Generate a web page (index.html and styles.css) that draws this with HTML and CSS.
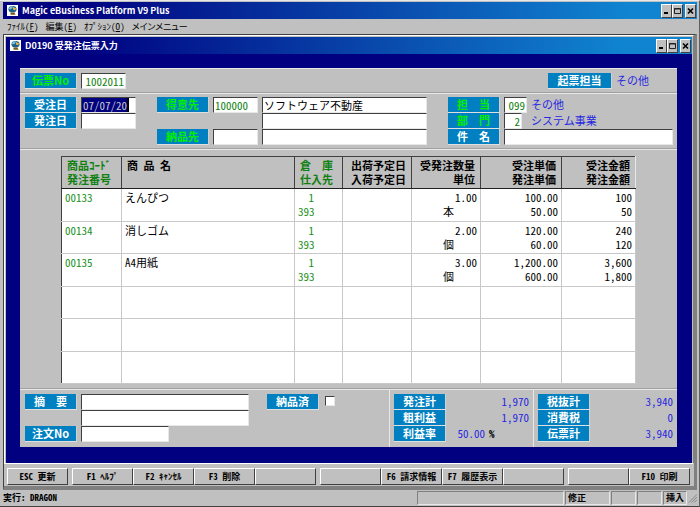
FILE: index.html
```html
<!DOCTYPE html>
<html lang="ja">
<head>
    <meta charset="UTF-8">
    <meta name="viewport" content="width=device-width, initial-scale=1.0">
    <title>Magic eBusiness Platform V9 Plus</title>
    <link rel="stylesheet" href="styles.css">
</head>
<body>
    <svg class="defs" width="0" height="0" aria-hidden="true">
        <symbol id="globe" viewBox="0 0 11 11">
            <rect width="11" height="11" fill="#fff"/>
            <ellipse cx="5.5" cy="4.2" rx="4" ry="3.200" fill="#1c5f8c"/>
            <path d="M1.800 3.600Q3 1 6 1.400L5 3.600L3 4.600Z" fill="#7cc4dd"/>
            <path d="M6 2L9.200 3.400L8 5.200L6 4.600Z" fill="#e9b64a"/>
            <path d="M3.500 7.500h4L8.500 9.800H3.500Z" fill="#7a5a1c"/>
        </symbol>
        <symbol id="min" viewBox="0 0 9 12"><path d="M2 8h4" stroke="#000" stroke-width="2"/></symbol>
        <symbol id="max" viewBox="0 0 9 12"><path d="M1.500 3.500h6v5h-6zM1 4h7" stroke="#222" fill="none"/></symbol>
        <symbol id="close" viewBox="0 0 9 12"><path d="M2 3.500l5 5M7 3.500l-5 5" stroke="#000" stroke-width="1.600"/></symbol>
    </svg>

    <header class="titlebar">
        <svg class="app-icon"><use href="#globe"/></svg>
        <h1>Magic eBusiness Platform V9 Plus</h1>
        <div class="controls">
            <button aria-label="最小化"><svg><use href="#min"/></svg></button>
            <button aria-label="最大化"><svg><use href="#max"/></svg></button>
            <button class="close" aria-label="閉じる"><svg><use href="#close"/></svg></button>
        </div>
    </header>

    <nav class="menu">
        <button>ﾌｧｲﾙ(<u>F</u>)</button>
        <button>編集(<u>E</u>)</button>
        <button>ｵﾌﾟｼｮﾝ(<u>O</u>)</button>
        <button class="wide">メインメニュー</button>
    </nav>

    <main class="workspace">
        <div class="window">
            <div class="titlebar">
                <svg class="app-icon"><use href="#globe"/></svg>
                <h2>D0190 受発注伝票入力</h2>
                <div class="controls">
                    <button aria-label="最小化"><svg><use href="#min"/></svg></button>
                    <button aria-label="最大化"><svg><use href="#max"/></svg></button>
                    <button class="close" aria-label="閉じる"><svg><use href="#close"/></svg></button>
                </div>
            </div>

            <form class="panel">
                <div class="section slip">
                    <div class="row">
                        <label class="tag key" for="slip_no">伝票No</label>
                        <input class="code right" type="text" id="slip_no" value="1002011">
                    </div>
                    <div class="row author">
                        <span class="tag long">起票担当</span>
                        <span class="info">その他</span>
                    </div>
                </div>

                <div class="section fields">
                    <div class="dates">
                        <div class="row">
                            <label class="tag" for="order_date">受注日</label>
                            <input class="date selected" type="text" id="order_date" value="07/07/20">
                        </div>
                        <div class="row">
                            <label class="tag" for="purchase_date">発注日</label>
                            <input class="date" type="text" id="purchase_date">
                        </div>
                    </div>
                    <div class="customer">
                        <div class="row">
                            <label class="tag key" for="customer">得意先</label>
                            <input class="code" type="text" id="customer" value="100000">
                            <input class="name" type="text" aria-label="得意先名" value="ソフトウェア不動産">
                        </div>
                        <div class="row">
                            <input class="name second" type="text" aria-label="得意先名2">
                        </div>
                        <div class="row">
                            <label class="tag key" for="delivery">納品先</label>
                            <input class="code" type="text" id="delivery">
                            <input class="name" type="text" aria-label="納品先名">
                        </div>
                    </div>
                    <div class="staff">
                        <div class="row">
                            <label class="tag key" for="staff">担　当</label>
                            <input class="staff-no right" type="text" id="staff" value="099">
                            <span class="info">その他</span>
                        </div>
                        <div class="row">
                            <label class="tag key" for="dept">部　門</label>
                            <input class="dept-no right" type="text" id="dept" value="2">
                            <span class="info">システム事業</span>
                        </div>
                        <div class="row">
                            <label class="tag" for="subject">件　名</label>
                            <input class="name" type="text" id="subject">
                        </div>
                    </div>
                </div>

                <div class="section lines">
                    <table>
                        <colgroup>
                            <col class="c-code"><col><col class="c-store"><col class="c-day"><col class="c-qty"><col class="c-price"><col class="c-sum">
                        </colgroup>
                        <thead>
                            <tr>
                                <th class="key">商品ｺｰﾄﾞ<br>発注番号</th>
                                <th>商 品 名</th>
                                <th class="key">倉　庫<br>仕入先</th>
                                <th class="num">出荷予定日<br>入荷予定日</th>
                                <th class="num">受発注数量<br>単位</th>
                                <th class="num">受注単価<br>発注単価</th>
                                <th class="num">受注金額<br>発注金額</th>
                            </tr>
                        </thead>
                        <tbody>
                            <tr>
                                <td class="code-cell">00133</td>
                                <td>えんぴつ</td>
                                <td class="store">1<br>393</td>
                                <td></td>
                                <td class="num">1.00<br><span class="unit">本</span></td>
                                <td class="num">100.00<br>50.00</td>
                                <td class="num">100<br>50</td>
                            </tr>
                            <tr>
                                <td class="code-cell">00134</td>
                                <td>消しゴム</td>
                                <td class="store">1<br>393</td>
                                <td></td>
                                <td class="num">2.00<br><span class="unit">個</span></td>
                                <td class="num">120.00<br>60.00</td>
                                <td class="num">240<br>120</td>
                            </tr>
                            <tr>
                                <td class="code-cell">00135</td>
                                <td>A4用紙</td>
                                <td class="store">1<br>393</td>
                                <td></td>
                                <td class="num">3.00<br><span class="unit">個</span></td>
                                <td class="num">1,200.00<br>600.00</td>
                                <td class="num">3,600<br>1,800</td>
                            </tr>
                            <tr><td></td><td></td><td></td><td></td><td></td><td></td><td></td></tr>
                            <tr><td></td><td></td><td></td><td></td><td></td><td></td><td></td></tr>
                            <tr><td></td><td></td><td></td><td></td><td></td><td></td><td></td></tr>
                        </tbody>
                    </table>
                </div>

                <div class="section summary">
                    <div class="notes">
                        <div class="remarks">
                            <div class="row">
                                <label class="tag" for="remarks">摘　要</label>
                                <input class="name" type="text" id="remarks">
                            </div>
                            <div class="row">
                                <input class="name indent" type="text" aria-label="摘要2">
                            </div>
                            <div class="row">
                                <label class="tag" for="po_no">注文No</label>
                                <input class="po" type="text" id="po_no">
                            </div>
                        </div>
                        <div class="row">
                            <label class="tag" for="delivered">納品済</label>
                            <input type="checkbox" id="delivered">
                        </div>
                    </div>
                    <div class="totals">
                        <div class="row"><span class="tag">発注計</span><span class="amount">1,970</span></div>
                        <div class="row"><span class="tag">粗利益</span><span class="amount">1,970</span></div>
                        <div class="row"><span class="tag">利益率</span><span class="amount">50.00</span><b class="percent">%</b></div>
                    </div>
                    <div class="totals">
                        <div class="row"><span class="tag">税抜計</span><span class="amount">3,940</span></div>
                        <div class="row"><span class="tag">消費税</span><span class="amount">0</span></div>
                        <div class="row"><span class="tag">伝票計</span><span class="amount">3,940</span></div>
                    </div>
                </div>
            </form>
        </div>

        <div class="fkeys">
            <div class="keys one"><button>ESC 更新</button></div>
            <div class="keys four">
                <button>F1 ﾍﾙﾌﾟ</button>
                <button>F2 ｷｬﾝｾﾙ</button>
                <button>F3 削除</button>
                <button aria-label="F4"></button>
            </div>
            <div class="keys four">
                <button aria-label="F5"></button>
                <button>F6 請求情報</button>
                <button>F7 履歴表示</button>
                <button aria-label="F8"></button>
            </div>
            <div class="keys two">
                <button aria-label="F9"></button>
                <button>F10 印刷</button>
            </div>
        </div>
    </main>

    <footer class="status">
        <span class="running">実行: DRAGON</span>
        <span class="cell message"></span>
        <span class="cell mode">修正</span>
        <span class="cell small"></span>
        <span class="cell small"></span>
        <span class="cell insert">挿入</span>
        <svg class="grip" viewBox="0 0 10 10"><path d="M1 10L10 1M4 10L10 4M7 10L10 7" stroke="#808080"/></svg>
    </footer>
</body>
</html>
```
FILE: styles.css
```css
* {
    box-sizing: border-box;
}
body {
    margin: 0;
    padding: 1px 2px 0 3px;
    background-color: #c0c0c0;
    border-top: 1px solid #e8e8e8;
    border-right: 1px solid #606060;
    border-bottom: 2px solid #404040;
    font-family: "Noto Sans CJK JP", sans-serif;
    font-feature-settings: "hwid";
    font-size: 11px;
    line-height: 14px;
    color: #000;
}
button, input {
    font: inherit;
    font-feature-settings: inherit;
    color: inherit;
    margin: 0;
    padding: 0;
    border: 0;
    border-radius: 0;
}
.defs {
    position: absolute;
}

/* title bars */
.titlebar {
    display: flex;
    align-items: center;
    height: 17px;
    padding: 0 1px 0 4px;
    background: linear-gradient(to right, #000080 10%, #1084d0 90%);
    color: #fff;
}
.titlebar h1, .titlebar h2 {
    flex: 1;
    margin: 0 0 0 4px;
    font-size: 9px;
    font-feature-settings: normal;
    font-weight: bold;
}
.app-icon {
    width: 11px;
    height: 11px;
}
.controls {
    display: flex;
}
.controls button {
    width: 11px;
    height: 14px;
    background-color: #c0c0c0;
    border: 1px solid;
    border-color: #fff #404040 #404040 #fff;
}
.controls .close {
    margin-left: 2px;
}
.controls svg {
    display: block;
    width: 9px;
    height: 12px;
}

/* menu */
.menu {
    display: flex;
    gap: 7px;
    height: 15px;
    padding: 0 4px;
}
.menu button {
    background: none;
    font-size: 9px;
}
.menu .wide {
    font-feature-settings: "palt";
}

/* work area */
.workspace {
    border: 1px solid #404040;
    border-right: 3px solid #808080;
    border-bottom: 4px solid #808080;
}
.window {
    padding: 1px 1px 0;
    border: 1px solid;
    border-color: #fff #808080 #fff #fff;
    background-color: #c0c0c0;
}
.panel {
    margin: 0;
    border: solid #000080;
    border-width: 14px 15px 16px 14px;
}
.section {
    border-top: 1px solid #e8e8e8;
    border-bottom: 1px solid #a0a0a0;
}
.section:last-child {
    border-bottom: 0;
}
.row {
    display: flex;
    gap: 4px;
    height: 16px;
}
.tag {
    flex: none;
    width: 52px;
    border-bottom: 1px solid #e0e0e0;
    border-right: 1px solid #d0d0d0;
    background-color: #0080c0;
    color: #fff;
    font-feature-settings: normal;
    font-weight: bold;
    text-align: center;
    white-space: nowrap;
}
.tag.key {
    color: #00f000;
}
.tag.long {
    width: 64px;
}
input[type="text"] {
    height: 16px;
    min-width: 0;
    padding: 0 1px;
    border: 1px solid;
    border-color: #404040 #e8e8e8 #e8e8e8 #404040;
    background-color: #fff;
    color: #108010;
}
input.right {
    text-align: right;
}
input.code {
    flex: none;
    width: 45px;
}
input.date {
    width: 55px;
}
input.name {
    flex: 1;
    color: #000;
}
input.staff-no {
    width: 23px;
}
input.dept-no {
    width: 18px;
}
input.po {
    width: 88px;
}
input.selected {
    background: linear-gradient(to right, #000080 45px, #000 45px, #000 47px, #fff 47px);
    color: #c8c8c8;
}
.info, .amount {
    color: #2828e0;
}

.slip {
    display: flex;
    justify-content: space-between;
    padding: 4px 4px 3px 5px;
}
.author {
    width: 125px;
}
.fields {
    display: flex;
    justify-content: space-between;
    gap: 21px;
    padding: 3px 4px 3px 5px;
}
.customer {
    flex: 6;
}
.customer .second {
    margin-left: 105px;
}
.staff {
    flex: 5;
}
.staff .dept-no + .info {
    margin-left: 5px;
}

/* slip lines */
.lines {
    padding: 6px 41px 4px;
}
table {
    width: 100%;
    table-layout: fixed;
    border-collapse: collapse;
    background-color: #fff;
    border: 1px solid;
    border-color: #404040 #e8e8e8 #e8e8e8 #404040;
    line-height: 14px;
}
.c-code {
    width: 60px;
}
.c-store {
    width: 48px;
}
.c-day, .c-qty {
    width: 69px;
}
.c-price {
    width: 81px;
}
.c-sum {
    width: 74px;
}
th {
    height: 32px;
    padding: 1px 5px;
    border-right: 1px solid #404040;
    border-bottom: 1px solid #202020;
    background-color: #c0c0c0;
    text-align: left;
    vertical-align: top;
    font-weight: bold;
    white-space: nowrap;
}
th:last-child {
    border-right-color: #e8e8e8;
}
th.key {
    color: #108010;
    font-feature-settings: normal;
}
td {
    height: 32px;
    padding: 1px 3px;
    border-right: 1px solid #c8c8c8;
    border-bottom: 1px solid #c8c8c8;
    vertical-align: top;
    white-space: nowrap;
}
tr:nth-child(odd) td {
    height: 33px;
}
th.num, td.num {
    text-align: right;
}
td.code-cell, td.store {
    color: #209020;
}
td.store {
    padding-right: 28px;
    text-align: right;
}
td .unit {
    margin-right: 23px;
}

/* footer of the slip */
.summary {
    display: flex;
}
.notes {
    flex: 1;
    display: flex;
    gap: 18px;
    padding: 4px 0 5px 5px;
}
.remarks {
    flex: 0 1 224px;
}
.indent {
    margin-left: 56px;
}
input[type="checkbox"] {
    appearance: none;
    width: 10px;
    height: 10px;
    margin: 2px;
    border: 1px solid;
    border-color: #404040 #e8e8e8 #e8e8e8 #404040;
    background-color: #fff;
}
.totals {
    width: 144px;
    padding: 4px 4px 5px;
    border-left: 1px solid #e8e8e8;
}
.amount {
    flex: 1;
    text-align: right;
}
.percent {
    width: 40px;
}

/* function keys */
.fkeys {
    display: flex;
    gap: 4px;
    padding: 4px 4px 1px 3px;
}
.keys {
    display: flex;
}
.one {
    flex: 1;
}
.two {
    flex: 2;
}
.four {
    flex: 4;
}
.keys button {
    flex: 1;
    min-width: 0;
    height: 17px;
    border: 1px solid;
    border-color: #fff #404040 #404040 #fff;
    background-color: #c0c0c0;
    font-size: 9px;
    font-weight: bold;
    white-space: nowrap;
}

/* status bar */
.status {
    display: flex;
    align-items: center;
    gap: 1px;
    height: 16px;
    font-size: 9px;
    font-weight: bold;
}
.running {
    flex: 1;
}
.cell {
    height: 14px;
    padding-left: 2px;
    border: 1px solid;
    border-color: #808080 #e8e8e8 #e8e8e8 #808080;
    line-height: 12px;
}
.message {
    width: 147px;
}
.mode {
    width: 45px;
}
.small {
    width: 25px;
}
.insert {
    width: 24px;
}
.grip {
    width: 9px;
    height: 10px;
}
```
